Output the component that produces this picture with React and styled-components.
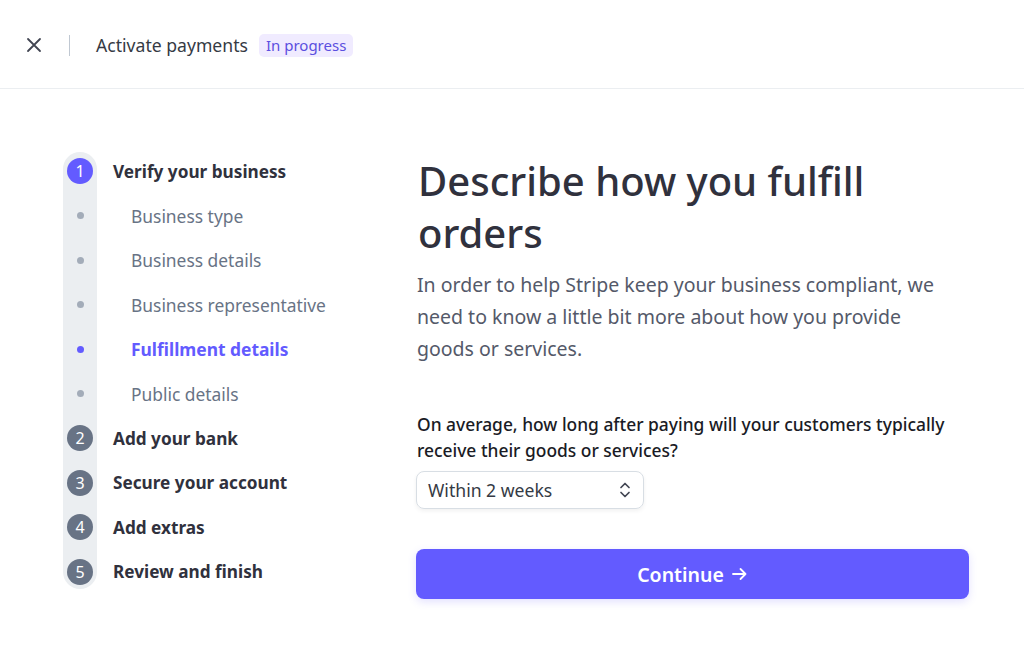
import React from "react";
import styled, { createGlobalStyle } from "styled-components";

const Global = createGlobalStyle`
  html, body { margin: 0; padding: 0; background: #ffffff; }
  body { font-family: "Noto Sans", "Open Sans", sans-serif; color: #30313d; }
  * { box-sizing: border-box; }
`;

const Page = styled.div`
  width: 1024px;
  min-height: 669px;
  background: #fff;
`;

const Header = styled.header`
  height: 89px;
  border-bottom: 1px solid #ebeef1;
  display: flex;
  align-items: center;
  padding: 2px 0 0 25px;
`;

const CloseButton = styled.button`
  width: 18px;
  height: 18px;
  border: 0;
  background: none;
  padding: 0;
  display: flex;
  align-items: center;
  justify-content: center;
  color: #414552;
  cursor: pointer;
`;

const Divider = styled.span`
  width: 1px;
  height: 21px;
  background: #c0c8d2;
  margin: 0 26px 0 26px;
`;

const Title = styled.h1`
  margin: 0;
  font-size: 17.6px;
  font-weight: 400;
  color: #353a44;
`;

const Badge = styled.span`
  margin-left: 11px;
  padding: 2px 7px;
  border-radius: 5px;
  background: #f0ebff;
  color: #5b4fe0;
  font-size: 15px;
  line-height: 19px;
`;

const Body = styled.div`
  display: flex;
  align-items: flex-start;
  padding: 63px 0 0 63px;
`;

const Steps = styled.ol`
  position: relative;
  list-style: none;
  margin: 0;
  padding: 3px 0 1px;
  width: 353px;
  display: flex;
  flex-direction: column;
  gap: 12.56px;

  &::before {
    content: "";
    position: absolute;
    left: 0;
    top: 0;
    bottom: 0;
    width: 34px;
    border-radius: 17px;
    background: #ebeef1;
  }
`;

const Row = styled.li`
  position: relative;
  height: 32px;
  display: flex;
  align-items: center;
`;

const Marker = styled.span`
  width: 34px;
  flex: none;
  display: flex;
  justify-content: center;
  align-items: center;
`;

const Circle = styled.span`
  width: 26px;
  height: 26px;
  border-radius: 50%;
  background: ${(p) => (p.$active ? "#635bff" : "#687385")};
  color: #fff;
  font-size: 16px;
  line-height: 1;
  display: flex;
  align-items: center;
  justify-content: center;
`;

const Dot = styled.span`
  width: 7px;
  height: 7px;
  border-radius: 50%;
  background: ${(p) => (p.$active ? "#635bff" : "#a3acb9")};
`;

const StepLabel = styled.span`
  margin-left: 16px;
  font-size: 17.2px;
  font-weight: 700;
  color: #30313d;
`;

const SubLabel = styled.span`
  margin-left: 34px;
  font-size: 17.4px;
  font-weight: ${(p) => (p.$active ? 700 : 400)};
  color: ${(p) => (p.$active ? "#635bff" : "#687385")};
`;

const Main = styled.main`
  width: 552px;
  display: flex;
  flex-direction: column;
`;

const Heading = styled.h2`
  margin: 3px 0 0;
  font-size: 40px;
  line-height: 52px;
  font-weight: 500;
  color: #30313d;
  padding-left: 2px;
`;

const Lead = styled.p`
  margin: 10px 0 0;
  max-width: 526px;
  font-size: 19.5px;
  line-height: 32px;
  color: #545969;
  padding-left: 1px;
`;

const Question = styled.label`
  margin-top: 46px;
  font-size: 17.4px;
  line-height: 26px;
  font-weight: 500;
  color: #1a1b25;
  padding-left: 1px;
`;

const SelectBox = styled.div`
  margin-top: 8px;
  width: 228px;
  height: 38px;
  border: 1px solid #d8dee4;
  border-radius: 8px;
  box-shadow: 0 2px 4px rgba(0, 0, 0, 0.06);
  display: flex;
  align-items: center;
  justify-content: space-between;
  padding: 0 12px 0 11px;
  font-size: 17.6px;
  color: #353a44;
`;

const Continue = styled.button`
  margin-top: 40px;
  height: 50px;
  width: 553px;
  border: 0;
  border-radius: 8px;
  background: #635bff;
  color: #fff;
  font-family: inherit;
  font-size: 19.5px;
  font-weight: 600;
  display: flex;
  align-items: center;
  justify-content: center;
  gap: 7px;
  box-shadow: 0 3px 8px rgba(99, 91, 255, 0.18);
  cursor: pointer;
`;

const steps = [
  { n: 1, label: "Verify your business", active: true, subs: [
    { label: "Business type" },
    { label: "Business details" },
    { label: "Business representative" },
    { label: "Fulfillment details", active: true },
    { label: "Public details" },
  ] },
  { n: 2, label: "Add your bank" },
  { n: 3, label: "Secure your account" },
  { n: 4, label: "Add extras" },
  { n: 5, label: "Review and finish" },
];

export default function App() {
  return (
    <Page>
      <Global />
      <Header>
        <CloseButton aria-label="Close">
          <svg width="16" height="16" viewBox="0 0 16 16" fill="none">
            <path d="M2 2l12 12M14 2L2 14" stroke="currentColor" strokeWidth="1.8" strokeLinecap="round" />
          </svg>
        </CloseButton>
        <Divider />
        <Title>Activate payments</Title>
        <Badge>In progress</Badge>
      </Header>
      <Body>
        <Steps>
          {steps.map((s) => (
            <React.Fragment key={s.n}>
              <Row>
                <Marker><Circle $active={s.active}>{s.n}</Circle></Marker>
                <StepLabel>{s.label}</StepLabel>
              </Row>
              {(s.subs || []).map((sub) => (
                <Row key={sub.label}>
                  <Marker><Dot $active={sub.active} /></Marker>
                  <SubLabel $active={sub.active}>{sub.label}</SubLabel>
                </Row>
              ))}
            </React.Fragment>
          ))}
        </Steps>
        <Main>
          <Heading>Describe how you fulfill orders</Heading>
          <Lead>
            In order to help Stripe keep your business compliant, we need to know a little bit more about how you provide goods or services.
          </Lead>
          <Question>On average, how long after paying will your customers typically receive their goods or services?</Question>
          <SelectBox>
            <span>Within 2 weeks</span>
            <svg width="12" height="18" viewBox="0 0 12 18" fill="none">
              <path d="M2 6.5l4-4 4 4M2 11.5l4 4 4-4" stroke="#414552" strokeWidth="1.7" strokeLinecap="round" strokeLinejoin="round" />
            </svg>
          </SelectBox>
          <Continue>
            Continue
            <svg width="17" height="16" viewBox="0 0 17 16" fill="none">
              <path d="M2 8h12.5M9.5 3l5 5-5 5" stroke="#fff" strokeWidth="1.8" strokeLinecap="round" strokeLinejoin="round" />
            </svg>
          </Continue>
        </Main>
      </Body>
    </Page>
  );
}
